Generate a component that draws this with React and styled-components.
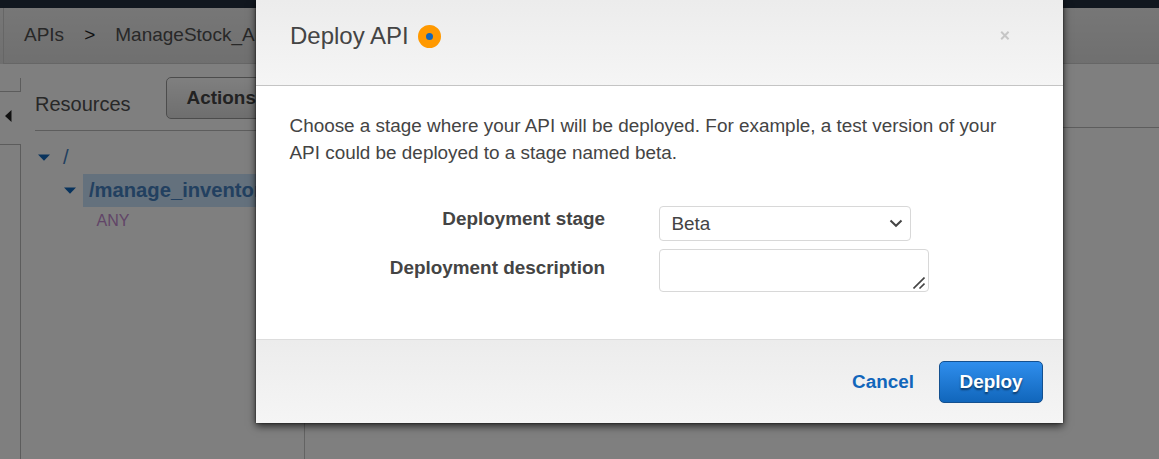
import React from "react";
import styled, { createGlobalStyle } from "styled-components";

const Global = createGlobalStyle`
  * { box-sizing: border-box; }
  body {
    margin: 0;
    overflow: hidden;
    background: #fff;
    color: #444;
    font-family: "Liberation Sans", Arial, sans-serif;
    font-size: 18.9px;
  }
`;

const Screen = styled.div`
  position: relative;
  width: 1159px;
  height: 459px;
  overflow: hidden;
  display: flex;
  flex-direction: column;
`;

const TopNav = styled.div`
  height: 8px;
  flex: none;
  background: #232f3e;
`;

const Breadcrumbs = styled.nav`
  height: 56px;
  flex: none;
  margin-left: 3px;
  padding: 0 0 1px 20px;
  display: flex;
  align-items: center;
  gap: 20px;
  white-space: nowrap;
  font-size: 19px;
  color: #505050;
  border-left: 1px solid #ccc;
  border-bottom: 1px solid #ccc;
`;

const BreadcrumbBar = styled.div`
  background: linear-gradient(#eee, #dfdfdf);
`;

const Separator = styled.span`
  color: #222;
`;

const Main = styled.div`
  flex: 1;
  display: flex;
`;

const Rail = styled.aside`
  width: 21px;
  padding-top: 14px;
  display: flex;
  flex-direction: column;
`;

const RailTop = styled.div`
  height: 14px;
  border: solid #b9b9b9;
  border-width: 0 1px 1px 0;
`;

const RailToggle = styled.div`
  height: 52px;
  padding: 18px 0 0 4px;
  svg { display: block; }
`;

const RailBottom = styled.div`
  flex: 1;
  border: solid #b9b9b9;
  border-width: 1px 1px 0 0;
`;

const Resources = styled.section`
  width: 284px;
  padding: 13px 14px 0 14px;
  border-right: 1px solid #c6c6c6;
`;

const ResourcesHead = styled.header`
  height: 54px;
  display: flex;
  align-items: flex-start;
  gap: 35px;
  border-bottom: 1px solid #bbb;
`;

const ResourcesTitle = styled.h2`
  margin: 0;
  padding-top: 15px;
  font-size: 20px;
  font-weight: 400;
  line-height: 24px;
  color: #505050;
`;

const ActionsButton = styled.button`
  height: 42px;
  width: 119px;
  padding: 0 20px 1px;
  text-align: left;
  font: bold 18.9px "Liberation Sans", Arial, sans-serif;
  color: #444;
  border: 1px solid #999;
  border-radius: 5px;
  background: linear-gradient(#fff, #ddd);
`;

const Tree = styled.div`
  padding-top: 10px;
`;

const TreeRow = styled.div`
  height: 33px;
  padding-left: ${(p) => p.$indent}px;
  display: flex;
  align-items: center;
  gap: ${(p) => p.$gap || 0}px;
  font-size: 20.2px;
  color: #4480c0;
  svg { flex: none; }
`;

const Selected = styled.span`
  flex: 1;
  height: 33px;
  padding-left: 6px;
  line-height: 32px;
  overflow: hidden;
  font-weight: 700;
  background: #c8e2fa;
`;

const Method = styled.div`
  padding: 4px 0 0 61.5px;
  font-size: 16px;
  line-height: 20px;
  color: #c38bd0;
`;

const Detail = styled.div`
  flex: 1;
  height: 64px;
  border-bottom: 1px solid #bbb;
`;

const Backdrop = styled.div`
  position: absolute;
  inset: 0;
  display: flex;
  align-items: flex-start;
  padding-left: 256px;
  background: rgba(0, 0, 0, 0.5);
`;

const Dialog = styled.div`
  width: 807px;
  height: 423px;
  display: flex;
  flex-direction: column;
  background: #fff;
  box-shadow: 0 3px 8px rgba(0, 0, 0, 0.7), 0 0 2px rgba(0, 0, 0, 0.7);
`;

const DialogHead = styled.header`
  height: 86px;
  padding: 20px 53px 0 34px;
  display: flex;
  align-items: flex-start;
  border-bottom: 1px solid #c4c4c4;
  background: linear-gradient(#ececec, #f5f5f5);
`;

const DialogTitle = styled.h1`
  margin: 0;
  font-size: 24px;
  font-weight: 400;
  line-height: 32px;
`;

const Beacon = styled.span`
  width: 23px;
  height: 23px;
  margin: 5px 0 0 9px;
  border: 8px solid #ff9900;
  border-radius: 50%;
  background: #1166bb;
`;

const Close = styled.button`
  margin: 5px 0 0 auto;
  padding: 0;
  border: 0;
  background: none;
  line-height: 0;
`;

const DialogBody = styled.div`
  flex: 1;
  padding: 26px 33px 0;
`;

const Intro = styled.p`
  margin: 0 0 40px;
  padding-left: 0.5px;
  width: 730px;
  line-height: 27px;
`;

const Field = styled.div`
  display: flex;
  align-items: flex-start;
  gap: 54px;
  margin-bottom: 8px;
`;

const Label = styled.label`
  width: 316px;
  text-align: right;
  font-weight: 700;
  line-height: 24px;
  padding-top: ${(p) => p.$top || 0}px;
`;

const Control = styled.div`
  display: flex;
  justify-content: space-between;
  align-items: center;
  width: ${(p) => p.$w}px;
  height: ${(p) => p.$h}px;
  padding: 0 7px 0 11.5px;
  border: 1px solid #d8d8d8;
  border-radius: 4px;
`;

const Description = styled(Control)`
  align-items: flex-end;
  justify-content: flex-end;
  padding: 0 3px 2px;
`;

const DialogFoot = styled.footer`
  height: 84px;
  padding-right: 20px;
  display: flex;
  align-items: center;
  justify-content: flex-end;
  gap: 25px;
  border-top: 1px solid #ddd;
  background: linear-gradient(#ececec, #f5f5f5);
`;

const Cancel = styled.a`
  font-weight: 700;
  color: #1166bb;
`;

const Deploy = styled.button`
  width: 104px;
  height: 42px;
  padding: 0;
  font: bold 18.9px "Liberation Sans", Arial, sans-serif;
  color: #fff;
  text-shadow: 0 2px 2px rgba(0, 0, 0, 0.5);
  border: 1px solid #14508f;
  border-radius: 5px;
  background: linear-gradient(#2f8eed, #1166bb);
`;

const Caret = () => (
  <svg width="12" height="7" viewBox="0 0 12 7">
    <path d="M0 0.5h12L6 6.8z" fill="#1166bb" />
  </svg>
);

export default function App() {
  return (
    <Screen>
      <Global />
      <TopNav />
      <BreadcrumbBar>
        <Breadcrumbs>
          <span>APIs</span>
          <Separator>&gt;</Separator>
          <span>ManageStock_API</span>
        </Breadcrumbs>
      </BreadcrumbBar>
      <Main>
        <Rail>
          <RailTop />
          <RailToggle>
            <svg width="8" height="12" viewBox="0 0 8 12">
              <path d="M7.5 0v12L1 6z" fill="#222" />
            </svg>
          </RailToggle>
          <RailBottom />
        </Rail>
        <Resources>
          <ResourcesHead>
            <ResourcesTitle>Resources</ResourcesTitle>
            <ActionsButton>Actions</ActionsButton>
          </ResourcesHead>
          <Tree>
            <TreeRow $indent={3} $gap={13}>
              <Caret />
              <span>/</span>
            </TreeRow>
            <TreeRow $indent={29} $gap={7}>
              <Caret />
              <Selected>/manage_inventory</Selected>
            </TreeRow>
            <Method>ANY</Method>
          </Tree>
        </Resources>
        <Detail />
      </Main>
      <Backdrop>
        <Dialog role="dialog">
          <DialogHead>
            <DialogTitle>Deploy API</DialogTitle>
            <Beacon />
            <Close aria-label="Close">
              <svg width="10" height="20" viewBox="0 0 10 20">
                <path d="M1.2 6.8l7.4 7.4M8.6 6.8l-7.4 7.4" stroke="#c6c6c6" strokeWidth="2" />
              </svg>
            </Close>
          </DialogHead>
          <DialogBody>
            <Intro>
              Choose a stage where your API will be deployed. For example, a test version of your
              API could be deployed to a stage named beta.
            </Intro>
            <Field>
              <Label $top={1}>Deployment stage</Label>
              <Control $w={252} $h={35}>
                <span>Beta</span>
                <svg width="14" height="9" viewBox="0 0 14 9">
                  <path d="M1.5 1.5L7 6.8l5.5-5.3" fill="none" stroke="#444" strokeWidth="2" />
                </svg>
              </Control>
            </Field>
            <Field>
              <Label $top={7}>Deployment description</Label>
              <Description $w={270} $h={43}>
                <svg width="12" height="12" viewBox="0 0 12 12">
                  <path d="M0.5 11.5l11-11M6.5 11.5l5-5" stroke="#444" strokeWidth="1.6" />
                </svg>
              </Description>
            </Field>
          </DialogBody>
          <DialogFoot>
            <Cancel>Cancel</Cancel>
            <Deploy>Deploy</Deploy>
          </DialogFoot>
        </Dialog>
      </Backdrop>
    </Screen>
  );
}
